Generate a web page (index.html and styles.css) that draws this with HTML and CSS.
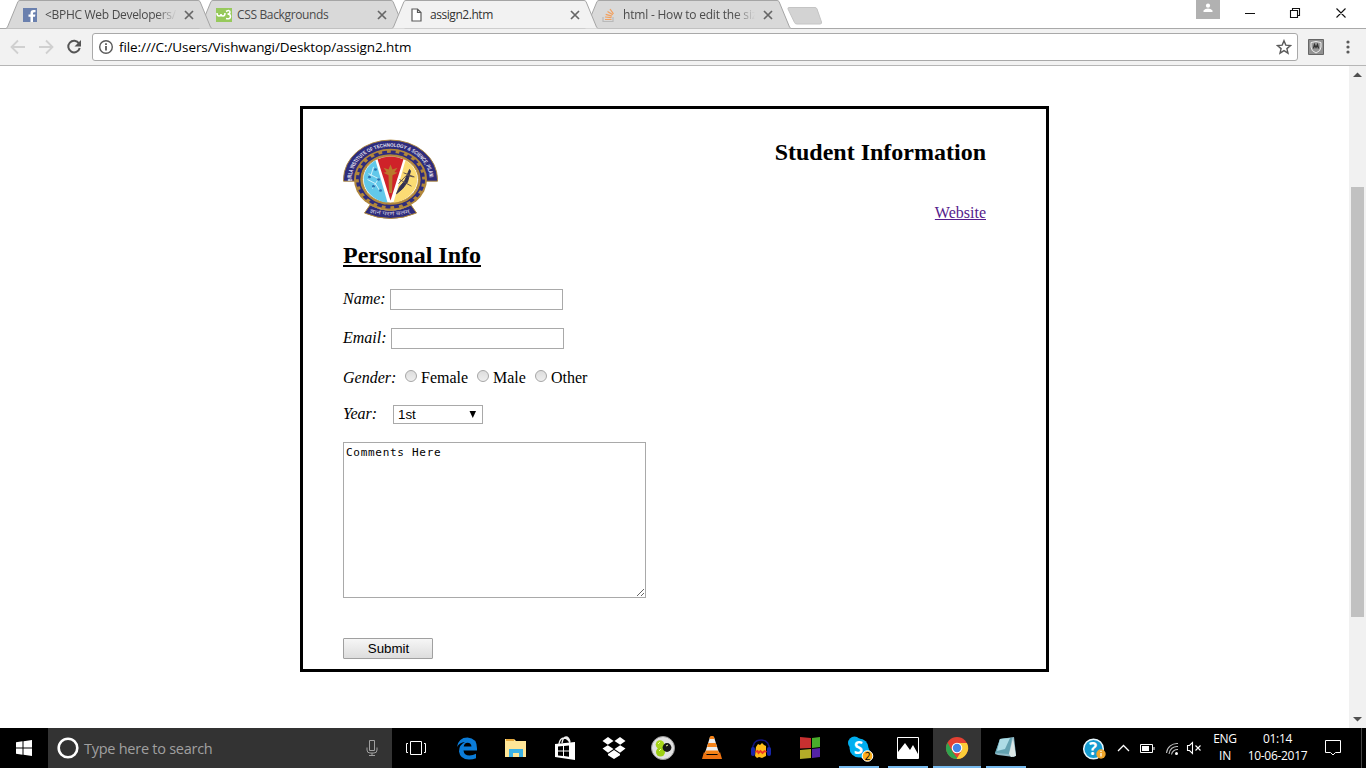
FILE: index.html
```html
<!DOCTYPE html>
<html lang="en">
<head>
<meta charset="utf-8">
<title>assign2.htm</title>
<link rel="stylesheet" href="styles.css">
</head>
<body>
<svg class="defs" width="0" height="0">
  <defs>
    <symbol id="tab" viewBox="0 0 206 29"><path d="M0 28.5 1.5 27 12 1.5Q12.8.5 14 .5H192Q193.2.5 194 1.5L204.500 27 206 28.500" fill="currentColor" stroke="#a5a5a5"/></symbol>
    <symbol id="x" viewBox="0 0 10 10"><path d="m1 1 8 8M9 1 1 9" stroke="#666" stroke-width="1.700" fill="none"/></symbol>
  </defs>
</svg>
<header class="strip">
  <div class="tab first"><svg class="shape"><use href="#tab"/></svg>
    <svg class="fav" width="14" height="14"><path fill="#4e69a2" opacity=".8" d="M0 0h14v14H0z"/><path fill="#fff" d="M7.500 14V8.800H5.500V6.500h2V5q0-3 3-3h2v2.200h-1.300q-1.200 0-1.200 1.100v1.200h2.400l-.4 2.300h-2V14z"/></svg>
    <span class="name fade">&lt;BPHC Web Developers/</span><svg class="close"><use href="#x"/></svg></div>
  <div class="tab second"><svg class="shape"><use href="#tab"/></svg>
    <svg class="fav" width="16" height="14"><path fill="#97c95c" d="M0 0h16v14H0z"/><path d="M1 5q0 3 2 3t2-2q0 2 2 2t2-3M10 3.500q4-2 4 .5 0 2-2.500 2 3 0 3 2.500 0 3-4.500 2" fill="none" stroke="#fff" stroke-width="1.500"/></svg>
    <span class="name">CSS Backgrounds</span><svg class="close"><use href="#x"/></svg></div>
  <div class="tab active"><svg class="shape"><use href="#tab"/></svg>
    <svg class="fav" width="11" height="14"><path d="M1 1h5.500L10 4.500V13H1zM6.500 1v3.500H10" fill="#fff" stroke="#5a5a5a" stroke-width="1.200"/></svg>
    <span class="name">assign2.htm</span><svg class="close"><use href="#x"/></svg></div>
  <div class="tab last"><svg class="shape"><use href="#tab"/></svg>
    <svg class="fav" width="14" height="14"><path d="M1 9v4.500h10V9" fill="none" stroke="#b9b9b9" stroke-width="1.200"/><path d="M3 11.500h6.500M3 9l6.500.7M3.700 6.300l6.200 1.800M5.500 3.500l5.300 3.300M8 1l3.500 4.800" stroke="#f2a05f" stroke-width="1.200"/></svg>
    <span class="name fade">html - How to edit the siz</span><svg class="close"><use href="#x"/></svg></div>
  <svg class="newtab" width="36" height="19"><path d="M2 .5h26q1.500 0 2 1.500l4.500 13q.5 2-1.500 2H10q-2 0-2.500-1.500L1 2Q.6.500 2 .5z" fill="#d3d3d3" stroke="#c4c4c4"/></svg>
  <svg class="window" width="170" height="28"><path d="M24 0H0v19h24z" fill="#b1b1b1"/><circle cx="12" cy="5.700" r="2.100" fill="#fff"/><path d="M7.500 12V10.500Q9 8.500 12 8.500t4.500 2V12z" fill="#fff"/><path d="M49 13.500h10M94.500 10.500h7v7h-7zM96.500 10V8.500h7v7H102M140.500 8.500l9 9M149.500 8.500l-9 9" fill="none" stroke="#111" stroke-width="1.100"/></svg>
</header>
<nav class="toolbar">
  <svg class="navicons" width="92" height="36"><g fill="none" stroke="#d0d0d0" stroke-width="1.800"><path d="M25 18H12M18 11.500 11.500 18l6.500 6.500M39 18h13M46 11.500l6.500 6.500-6.500 6.500"/><path d="M79 14.500A5.800 5.800 0 1 0 79.700 19" stroke="#555" stroke-width="2"/></g><path d="M81 11v6.500h-6.500z" fill="#555"/></svg>
  <div class="omnibox">
    <svg width="16" height="16"><circle cx="8" cy="8" r="6.300" fill="none" stroke="#5a5a5a" stroke-width="1.400"/><path d="M8 7v4.500M8 4.300v1.600" stroke="#5a5a5a" stroke-width="1.800"/></svg>
    <span class="url">file:///C:/Users/Vishwangi/Desktop/assign2.htm</span>
    <svg class="star" width="16" height="16"><path d="m8 1.700 1.800 4.400 4.700.4-3.600 3.100 1.100 4.600-4-2.500-4 2.500 1.100-4.600-3.600-3.100 4.700-.4z" fill="none" stroke="#5a5a5a" stroke-width="1.400"/></svg>
  </div>
  <svg class="ext" width="16" height="16"><path d="M.5.500h15v15H.5z" fill="#929292" stroke="#666"/><path d="M8 2.500 13 3.500V8q0 4-5 6-5-2-5-6V3.500z" fill="#999" stroke="#eee"/><path d="m5.500 9.500 1-4L8 8.500l1.500-3 1 4" fill="none" stroke="#333" stroke-width="1.300"/></svg>
  <svg class="dots" width="4" height="14"><g fill="#5a5a5a"><circle cx="2" cy="2" r="1.600"/><circle cx="2" cy="7" r="1.600"/><circle cx="2" cy="12" r="1.600"/></g></svg>
</nav>
<main class="view">
  <form class="card">
    <div class="top">
      <svg width="95" height="80" viewBox="0 0 95 80">
        <g transform="translate(47.500 40.500) scale(1 .84)">
          <path d="M-47 2V0A47 47 0 0 1 47 0V2H35V-5H-35V2z" fill="#2e2c7c" stroke="#b28a3a"/>
          <circle r="36.500" fill="#b1873b"/>
          <circle r="31" fill="none" stroke="#2e2c7c" stroke-width="1.600"/>
          <circle r="32.500" fill="none" stroke="#2e2c7c" stroke-width="4" stroke-dasharray="4.800 3.710"/>
          <circle r="28" fill="#fff" stroke="#b1873b"/>
          <path d="M-15-23A28 28 0 0 0-3 27.500z" fill="#62c8ea"/>
          <path d="M-13-24A28 28 0 0 1 13-24L0 25z" fill="#cf2229"/>
          <path d="M15-23A28 28 0 0 1 3 27.500z" fill="#fbdc74"/>
          <path d="M-1.500 16-2-5-7-8l3-1-3-5 5 2 2-6 2 6 5-2-3 5 3 1-5 3-.5 21z" fill="#b9792c"/>
          <path d="m6 17 3-8 5-7 5-14 1 2-3 13-5 8z" fill="#313052" stroke="#313052"/>
          <path d="M8 5l8-10 7 2M13-8l11 5M9 0l12 8" fill="none" stroke="#5a4d50"/>
          <path d="m-23 0 8 5 4 8M-22-7l10 6-6 12M-17-15l-3 12" fill="none" stroke="#d8f4fc"/>
          <g fill="#2870af"><circle cx="-15" cy="-12" r="1.500"/><circle cx="-21" cy="-3" r="1.500"/><circle cx="-12" cy="0" r="1.500"/><circle cx="-17" cy="8" r="1.500"/><circle cx="-10" cy="13" r="1.500"/></g>
          <path id="arc" d="M-39 2V0A39 39 0 0 1 39 0V2" fill="none"/>
          <text class="crest"><textPath href="#arc" textLength="122" lengthAdjust="spacingAndGlyphs">BIRLA INSTITUTE OF TECHNOLOGY &amp; SCIENCE, PILANI</textPath></text>
        </g>
        <path d="M27 66Q47.500 77 68 66L73.500 74Q47.500 85 21.500 74z" fill="#2e2c7c" stroke="#b28a3a"/>
        <path id="ribbon" d="M26.500 73.500Q47.500 79.500 68.500 73.500" fill="none"/>
        <text class="motto"><textPath href="#ribbon" textLength="41" lengthAdjust="spacingAndGlyphs">ज्ञानं परमं बलम्</textPath></text>
      </svg>
      <div class="right"><h2>Student Information</h2><a href="#">Website</a></div>
    </div>
    <h2 class="section">Personal Info</h2>
    <div class="row"><i class="l-name">Name:</i><input class="field"></div>
    <div class="row email"><i class="l-email">Email:</i><input class="field"></div>
    <div class="row gender"><i class="l-gender">Gender:</i><input type="radio" class="radio"><span class="female">Female</span><input type="radio" class="radio"><span class="male">Male</span><input type="radio" class="radio"><span>Other</span></div>
    <div class="row year"><i class="l-year">Year:</i><div class="select"><span>1st</span><svg width="8" height="8"><path d="M.5 0h6.500L3.800 7z"/></svg></div></div>
    <textarea class="comments">Comments Here</textarea>
    <button type="button" class="submit">Submit</button>
  </form>
  <div class="scroll"><svg width="17" height="17"><path d="M4 11 8.500 6.500 13 11z" fill="#505050"/></svg><div class="thumb"></div><svg class="down" width="17" height="17"><path d="M4 6 8.500 10.500 13 6z" fill="#505050"/></svg></div>
</main>
<footer class="taskbar">
  <svg class="start" width="48" height="40"><path fill="#fff" d="m16 14.200 6.500-.9v6.200H16zM23.500 13.200 32 12v7.500h-8.500zM16 20.500h6.500v6.200l-6.500-.9zM23.500 20.500H32V28l-8.500-1.200z"/></svg>
  <div class="search"><svg width="22" height="22"><circle cx="11" cy="11" r="9.300" fill="none" stroke="#fff" stroke-width="2.600"/></svg><span>Type here to search</span>
    <svg class="mic" width="12" height="18"><path d="M3.500 1.500h5v10h-5zM1 8.500V11q0 3 3 3h4q3 0 3-3V8.500M6 14v2.500M3 16.500h6" fill="none" stroke="#a0a0a0"/></svg></div>
  <div class="apps">
    <svg class="app taskview"><path d="M18.500 13.500h11v13h-11zM16 15.500h-1.500v9H16M32 15.500h1.500v9H32" fill="none" stroke="#fff"/></svg>
    <svg class="app"><path d="M14 19Q15.500 9.500 24.500 9.500 34 10 34 20.500v2H20.500q.5 5 6 5 3.500 0 6.500-1.800v4.500Q30 31.500 26 31.500q-9-.3-10-8-.2-6.500 6-9.500-5.500.7-8 5zM20.700 18.500h7.800q-.2-3.800-4-3.800-3.200.3-3.800 3.800z" fill="#0b7cd8"/></svg>
    <svg class="app"><path d="M13 11h9l2 2h10v16H13z" fill="#ffe697"/><path d="M14 11h8v2h-8z" fill="#e5a83b"/><path d="M17 29v-8h14v8h-4v-4h-6v4z" fill="#3bb2e5"/></svg>
    <svg class="app"><path d="M14 16l20-2v18l-20-3z" fill="#fff"/><path d="M18 16q1-6 5-6t6 5M21 15q1-6 4-6t4 5" fill="none" stroke="#eee" stroke-width="1.400"/><path d="m17 18.500 5-.5v4.500h-5zM23 18l5-.6v5.100h-5zM17 23.500h5V28l-5-.5zM23 23.500h5v5.300l-5-.7z" fill="#000"/></svg>
    <svg class="app"><path d="m18 9 5.500 4-5.700 3.700L12.500 13zM30 9l5.500 4-5.300 3.700-5.700-3.700zM12.500 20.500l5.300-3.300 5.700 3.800-5.500 3.700zM35.500 20.500l-5.300-3.300-5.700 3.800 5.500 3.700zM18 26l6-4 6 4v1.200L24 31l-6-3.800z" fill="#fff"/></svg>
    <svg class="app"><circle cx="24" cy="20" r="11.500" fill="#e2e2e2" stroke="#999"/><circle cx="21" cy="16.500" r="4.300" fill="#a7d51a"/><circle cx="21.500" cy="24" r="4.500" fill="#9ccf12"/><circle cx="28" cy="19.500" r="4.400" fill="#151515"/><path d="m19 16 2-2M20 23l2-2M27 18l2-1" stroke="#efffa0"/></svg>
    <svg class="app"><path d="M22 9h4l5 16H17z" fill="#eee"/><path d="m21.500 10 1-2h3l1 3h-5zM20.300 15h7.400l1.300 4H19zM17.800 22.500h12.400L31 26H17z" fill="#f58217"/><path d="m16 24-2 7h20l-2-7-3 3h-10z" fill="#ee7311"/></svg>
    <svg class="app"><path d="M15.500 24Q15 12 24 12T32.500 24" fill="none" stroke="#11117a" stroke-width="1.600"/><rect x="14" y="19" width="4" height="9" rx="2" fill="#1826aa"/><rect x="30" y="19" width="4" height="9" rx="2" fill="#1826aa"/><path d="m19 19 2-3 2 1 2-2 2 2 2 1v10l-2 1-2 1-3-1-2 1-2-2z" fill="#ffbd19"/><path d="m18.500 24 2-1 1 2 2-2 2 2 2-2 2 1" fill="none" stroke="#ec3823" stroke-width="1.800"/></svg>
    <svg class="app"><path d="m14 9 11 1v10l-11 .5z" fill="#c83030"/><path d="m26 10 8-1v10l-8 1z" fill="#49ad2b"/><path d="m14 22 11-1v9l-11 1z" fill="#b4ab28"/><path d="m26 21 8-1v9l-8 1z" fill="#5423a5"/></svg>
    <svg class="app run"><circle cx="19.500" cy="15" r="6.500" fill="#00aff0"/><circle cx="24" cy="20" r="9.500" fill="#00aff0"/><circle cx="29" cy="24.500" r="6" fill="#00aff0"/><text class="skype" x="23.500" y="26">S</text><circle cx="32.500" cy="28" r="5.300" fill="#ffae19" stroke="#fff"/><text class="badge" x="32.500" y="31.500">2</text><path class="line" d="M4 38h40v2H4z"/></svg>
    <svg class="app run"><path d="M13.500 9.500h21v21h-21z" stroke="#fff"/><path d="M14 24l7-9 5 7 3-5 5 9v5H14z" fill="#fff"/><path class="line" d="M4 38h40v2H4z"/></svg>
    <svg class="app chrome"><circle cx="24" cy="20" r="11" fill="#e34133"/><path d="m14.500 14.500 5.500 10 5 6.500A11 11 0 0 1 14.500 14.500" fill="#2fa44f"/><path d="M24 15h9.900A11 11 0 0 1 23.500 31L29 22z" fill="#fccc38"/><circle cx="24" cy="20" r="5.300" fill="#fff"/><circle cx="24" cy="20" r="4.200" fill="#4285e8"/><path class="line" d="M0 38h48v2H0z"/></svg>
    <svg class="app run"><path d="m18 11 14-2 2 18-2 2-16-2-3-1z" fill="#8fbac7"/><path d="m18 11 12-1-3 16-14-1z" fill="#63a2b1"/><path d="m18 11 10-1-5 11-8 2z" fill="#addce5"/><path d="m31 10 3 18-5 1-2-3z" fill="#dce7e7"/><path class="line" d="M4 38h40v2H4z"/></svg>
  </div>
  <div class="tray">
    <svg width="124" height="40"><circle cx="11.500" cy="21" r="9.800" fill="#159bd0" stroke="#e7f6fc" stroke-width="1.500"/><text class="help" x="11" y="27">?</text><circle cx="19" cy="26" r="4.700" fill="#f0a62a"/><path d="M19 25v3.500M19 22.800V24" stroke="#fff" stroke-width="1.200"/><path d="m36 23 5.500-5.500L47 23" fill="none" stroke="#fff" stroke-width="1.300"/><path d="M58.500 16.500h12v8h-12zM72 19v3" fill="none" stroke="#fff"/><path d="M60 18h7v5h-7z" fill="#fff"/><g fill="none" stroke="#bbb" stroke-width="1.100"><path d="M84.500 25A10.500 10.500 0 0 1 96 15.500M87 26A8 8 0 0 1 96 18.500M89.500 26.500A6 6 0 0 1 96 21.500"/><path d="M105.500 17.500h2l3-3v11l-3-3h-2z" stroke="#fff"/><path d="m113.500 17.500 5 5M118.500 17.500l-5 5" stroke="#fff"/></g><circle cx="94.500" cy="25.500" r="1.500" fill="#fff"/></svg>
    <div class="stack lang"><span>ENG</span><span>IN</span></div>
    <div class="stack clock"><span>01:14</span><span>10-06-2017</span></div>
    <svg class="note" width="18" height="18"><path d="M1.500 1.500h15v12h-5L9 16l-2.500-2.500h-5z" fill="none" stroke="#fff"/></svg>
    <div class="peek"></div>
  </div>
</footer>
</body>
</html>
```
FILE: styles.css
```css
* { box-sizing: border-box; }
body { margin: 0; width: 1366px; height: 768px; overflow: hidden; display: flex; flex-direction: column; background: #fff; font-family: "Open Sans", "Noto Sans", sans-serif; color: #000; }
svg { display: block; flex: none; }
.defs { position: absolute; }

.strip { height: 29px; flex: none; display: flex; align-items: flex-start; padding-left: 6px; border-bottom: 1px solid #a9a9a9; }
.tab { position: relative; width: 206px; height: 29px; margin-right: -13px; flex: none; display: flex; align-items: center; padding: 0 17px; color: #d9d9d9; }
.tab.first { z-index: 2; }
.tab.second, .tab.last { z-index: 1; }
.tab.active { z-index: 3; color: #f2f2f2; padding-left: 19px; }
.shape { position: absolute; left: 0; top: 0; width: 206px; height: 29px; z-index: -1; }
.fav { margin-right: 8px; }
.second .fav { margin-right: 5px; }
.last .fav { margin-right: 7px; }
.name { font-size: 12px; letter-spacing: -.35px; color: #4a4a4a; white-space: nowrap; width: 136px; }
.active .name { color: #333; letter-spacing: -.45px; }
.first .name { letter-spacing: -.3px; }
.last .name { letter-spacing: -.2px; }
.fade { -webkit-mask-image: linear-gradient(90deg, #000 82%, transparent 97%); mask-image: linear-gradient(90deg, #000 82%, transparent 97%); }
.close { width: 10px; height: 10px; position: relative; margin-left: auto; margin-right: 1px; }
.newtab { margin: 7px 0 0 9px; }
.window { margin-left: auto; }

.toolbar { height: 37px; flex: none; display: flex; align-items: center; background: #f2f2f2; border-bottom: 1px solid #b6b6b6; }
.omnibox { width: 1206px; height: 28px; background: #fff; border: 1px solid #a9a9a9; border-radius: 3px; display: flex; align-items: center; padding: 0 5px; }
.url { margin-left: 5px; font-size: 13.500px; letter-spacing: -.09px; white-space: nowrap; }
.star { margin-left: auto; }
.ext { margin-left: 10px; }
.dots { margin-left: 22px; }

.view { height: 662px; flex: none; display: flex; justify-content: space-between; font-family: "Liberation Serif", serif; font-size: 16px; line-height: 18px; }
.card { width: 749px; height: 566px; margin: 40px 0 0 300px; border: 3px solid #000; padding: 30px 60px 0 40px; }
.top { display: flex; justify-content: space-between; height: 80px; }
.right { text-align: right; display: flex; flex-direction: column; justify-content: space-between; height: 83px; }
.right a { color: #551a8b; }
h2 { margin: 0; font-size: 24px; line-height: 27px; }
.section { margin-top: 23px; text-decoration: underline; }
.crest { font: bold 6px "Liberation Sans", sans-serif; fill: #e8e4ef; }
.motto { font: 5.500px "Noto Sans", sans-serif; fill: #c9c4dc; }
.row { display: flex; align-items: center; height: 21px; margin-top: 20px; }
.row i, .row > span { padding-bottom: 2px; }
.field { width: 173px; height: 21px; border: 1px solid #a9a9a9; padding: 1px; outline: none; }
.l-name { width: 47px; }
.l-email { width: 48px; }
.email { margin-top: 18px; }
.gender { margin-top: 19px; }
.l-gender { width: 62px; }
.radio { appearance: none; width: 12px; height: 12px; margin: 0 4px 5px 0; border: 1px solid #a6a6a6; border-radius: 50%; background: linear-gradient(#ddd, #eee); }
.female { width: 56px; }
.male { width: 42px; }
.year { margin-top: 15px; }
.l-year { width: 50px; }
.select { width: 90px; height: 19px; border: 1px solid #a9a9a9; display: flex; align-items: center; justify-content: space-between; padding: 0 5px 0 4px; font: 13.333px "Liberation Sans", sans-serif; }
.comments { display: block; width: 303px; height: 156px; margin-top: 17px; border: 1px solid #a9a9a9; padding: 2px; outline: none; font: 11px/16px "DejaVu Sans Mono", monospace; letter-spacing: .71px; }
.submit { display: block; width: 90px; height: 21px; margin-top: 40px; padding: 0 0 0 1px; border: 1px solid #a0a0a0; border-radius: 1px; background: linear-gradient(#f6f6f6, #ddd); color: #000; font: 13.333px "Liberation Sans", sans-serif; }
.scroll { width: 17px; background: #f1f1f1; display: flex; flex-direction: column; }
.thumb { width: 13px; height: 430px; margin: 104px 0 0 2px; background: #c1c1c1; }
.down { margin-top: auto; }

.taskbar { height: 40px; flex: none; background: #000; display: flex; align-items: center; }
.search { width: 344px; height: 40px; background: #333; display: flex; align-items: center; padding: 0 14px 0 9px; color: #a0a0a0; font-size: 14.500px; letter-spacing: -.26px; }
.search span { margin-left: 5px; }
.mic { margin-left: auto; }
.apps { display: flex; gap: 1px; }
.app { width: 48px; height: 40px; }
.taskview { margin-right: 2px; }
.chrome { background: #343434; }
.line { fill: #76b9ed; }
.skype { font: bold 17px "Open Sans", sans-serif; fill: #fff; text-anchor: middle; }
.badge { font: 10px "Open Sans", sans-serif; fill: #000; text-anchor: middle; }
.help { font: bold 17px "Open Sans", sans-serif; fill: #fff; text-anchor: middle; }
.tray { margin-left: auto; display: flex; align-items: center; height: 40px; color: #fff; }
.stack { display: flex; flex-direction: column; align-items: center; font-size: 12px; line-height: 17px; padding-bottom: 2px; letter-spacing: -.3px; }
.lang { width: 38px; }
.clock { width: 67px; }
.note { margin-left: 13px; }
.peek { width: 5px; height: 40px; margin-left: 19px; border-left: 1px solid #444; }
```
